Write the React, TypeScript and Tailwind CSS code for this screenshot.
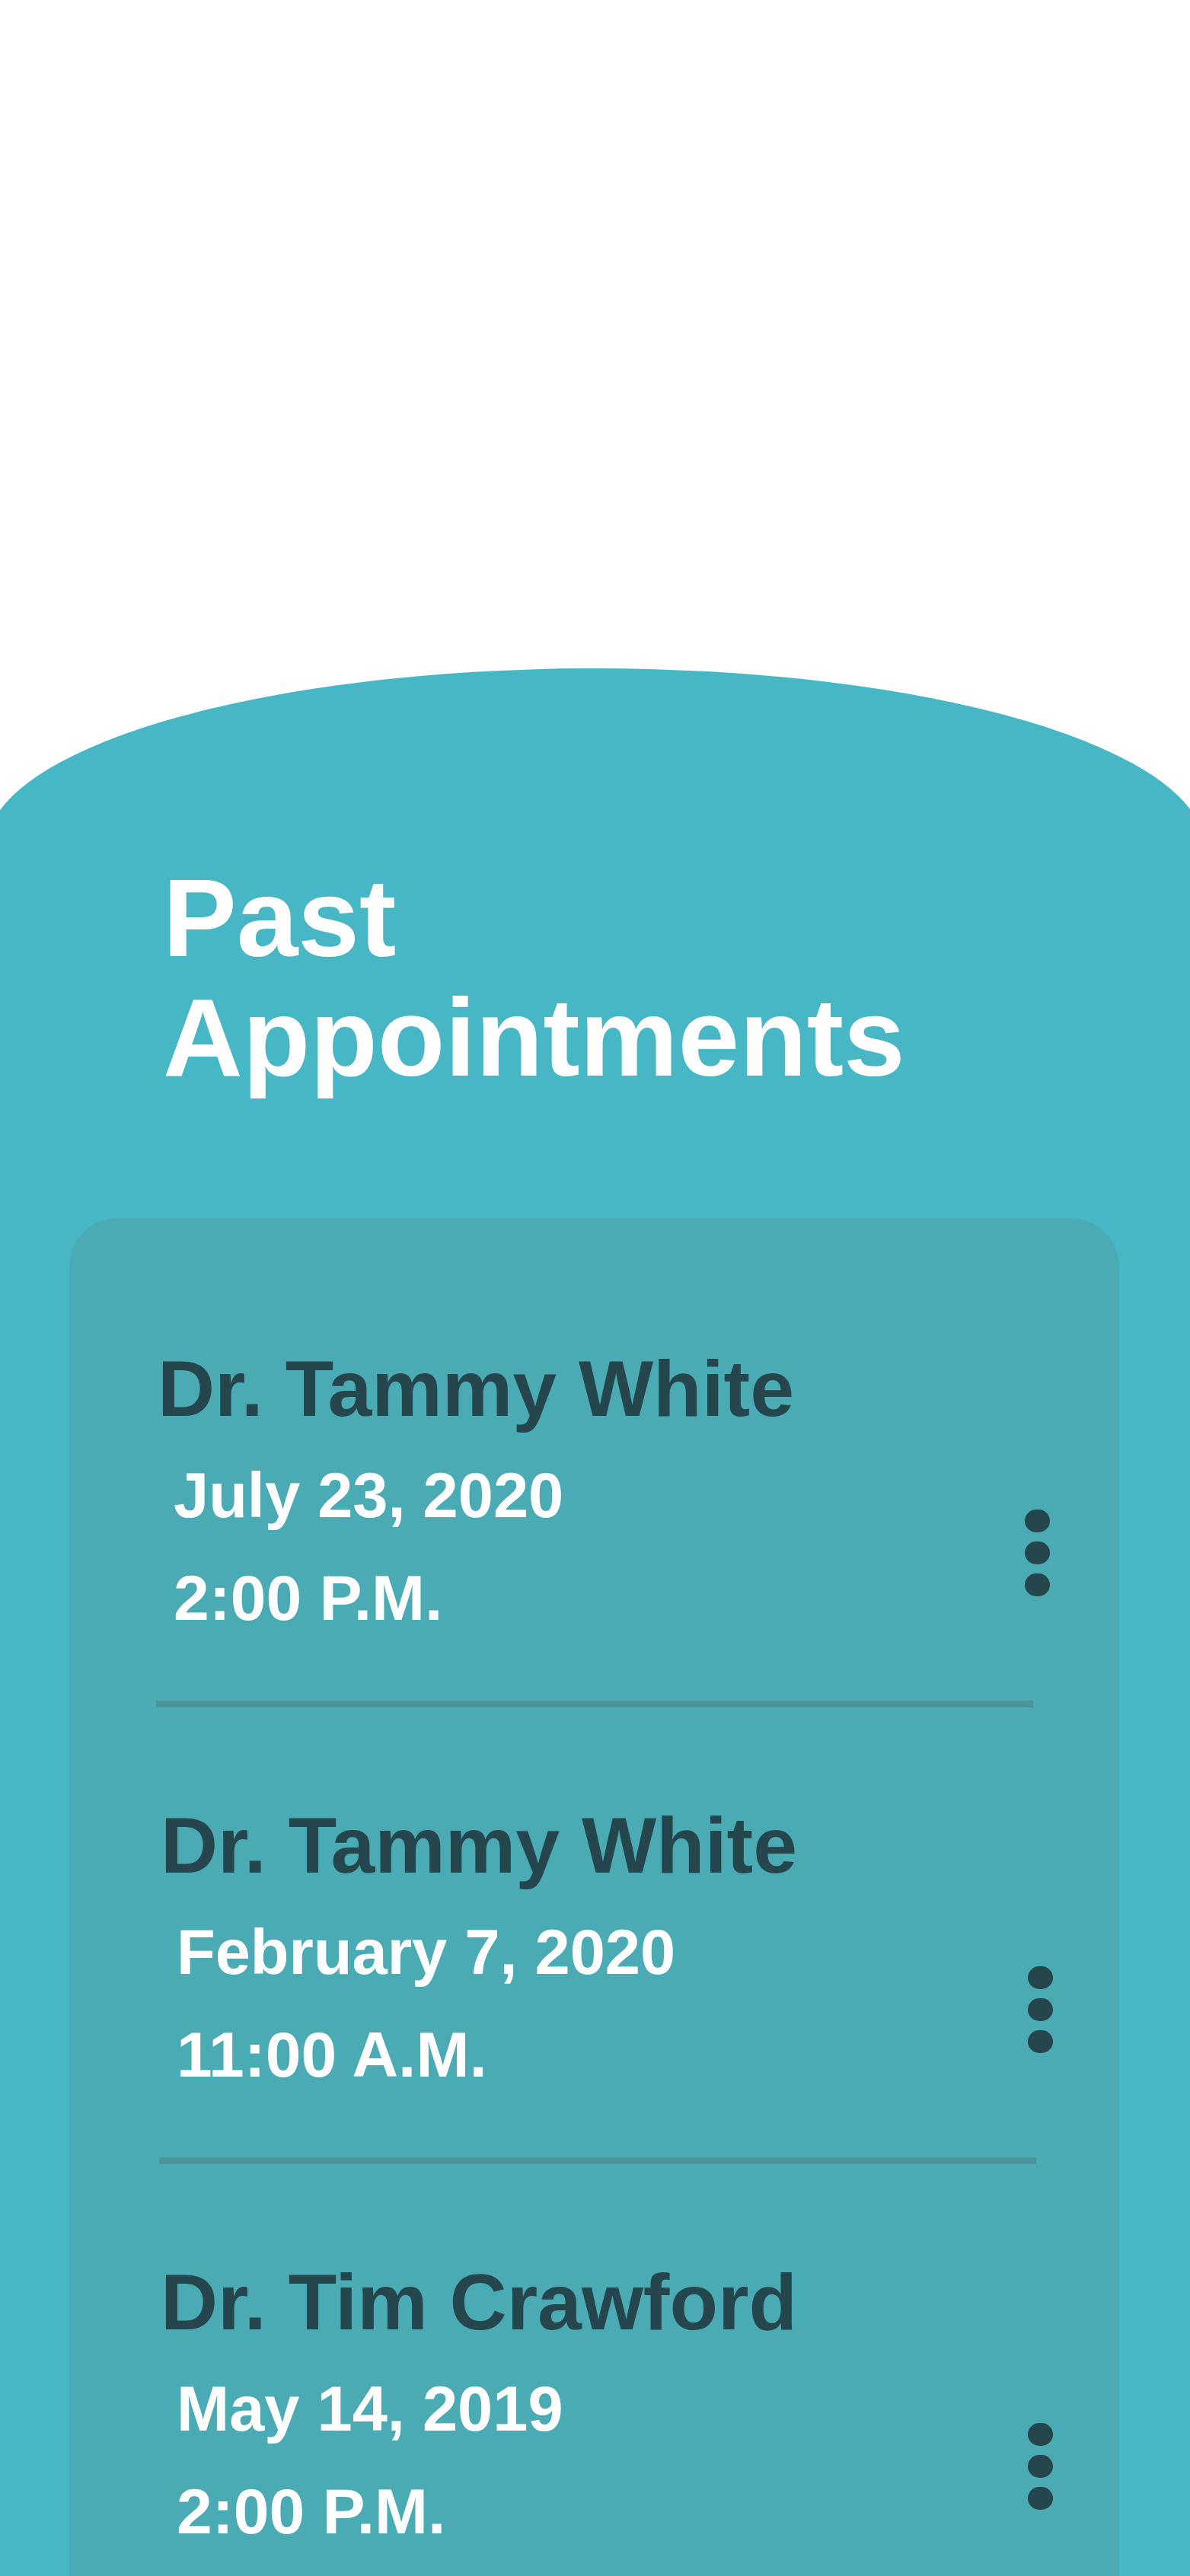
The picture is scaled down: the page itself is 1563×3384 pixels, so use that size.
import { Fragment } from "react";

interface Appointment {
  doctor: string;
  date: string;
  time: string;
}

const appointments: Appointment[] = [
  { doctor: "Dr. Tammy White", date: "July 23, 2020", time: "2:00 P.M." },
  { doctor: "Dr. Tammy White", date: "February 7, 2020", time: "11:00 A.M." },
  { doctor: "Dr. Tim Crawford", date: "May 14, 2019", time: "2:00 P.M." },
];

function MoreDots() {
  return (
    <button className="flex flex-col gap-[12px] pt-[226px]" aria-label="More options">
      <span className="block w-[33px] h-[30px] rounded-full bg-[#26464d]" />
      <span className="block w-[33px] h-[30px] rounded-full bg-[#26464d]" />
      <span className="block w-[33px] h-[30px] rounded-full bg-[#26464d]" />
    </button>
  );
}

function AppointmentRow({ item, shifted }: { item: Appointment; shifted: boolean }) {
  return (
    <div className={shifted ? "ml-[4px] -mr-[4px]" : ""}>
      <div className="flex justify-between">
        <div className="pl-[2px]">
          <p className="text-[104px] leading-[134px] font-bold text-[#26464d] whitespace-nowrap">
            {item.doctor}
          </p>
          <div className="pl-[21px] mt-[7px] text-white font-bold">
            <p className="text-[83px] leading-[134px] whitespace-nowrap">{item.date}</p>
            <p className="text-[84px] leading-[134px] whitespace-nowrap">{item.time}</p>
          </div>
        </div>
        <MoreDots />
      </div>
      <div className="mt-[68px] w-[1152px] h-[9px] bg-[#4a949b]" />
    </div>
  );
}

export default function App() {
  return (
    <div
      className="h-[3384px] w-full overflow-hidden flex flex-col bg-white"
      style={{ fontFamily: '"Liberation Sans", Arial, sans-serif' }}
    >
      {/* white top area */}
      <div className="h-[878px] shrink-0" />

      {/* teal sheet with wide curved top */}
      <div className="flex-1 self-center w-[1600px] bg-[#48b7c5] rounded-t-[800px_236px]">
        <div className="w-[1563px] mx-auto">
          <h1 className="pt-[250px] pl-[214px] text-[145px] leading-[157px] font-bold text-white">
            Past
            <br />
            Appointments
          </h1>

          {/* list card */}
          <div className="mt-[158px] ml-[91px] w-[1379px] h-[2000px] rounded-t-[64px] bg-[#4aabb4] pt-[157px] pl-[114px] pr-[91px]">
            {appointments.map((a, i) => (
              <Fragment key={i}>
                <div className={i === 0 ? "" : "mt-[114px]"}>
                  <AppointmentRow item={a} shifted={i > 0} />
                </div>
              </Fragment>
            ))}
          </div>
        </div>
      </div>
    </div>
  );
}
